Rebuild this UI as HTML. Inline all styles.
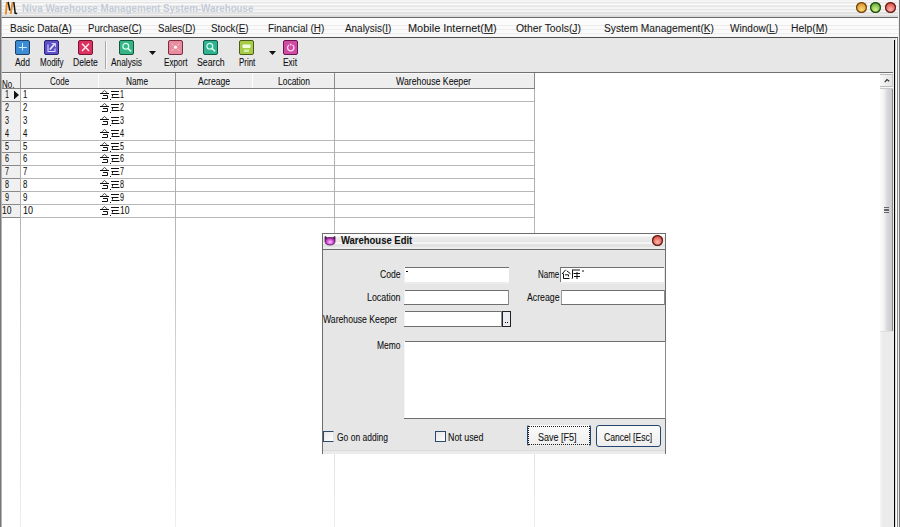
<!DOCTYPE html>
<html><head><meta charset="utf-8"><style>
html,body{margin:0;padding:0;}
body{width:900px;height:527px;position:relative;overflow:hidden;background:#fff;font-family:"Liberation Sans",sans-serif;}
body>div,body>svg{position:absolute;}
.t{white-space:nowrap;line-height:1;transform-origin:0 0;-webkit-text-stroke:0.08px currentColor;}
</style></head><body>
<div style="left:0px;top:0px;width:900px;height:17px;background:linear-gradient(#f2f2f2 0px 1px,#f8f8f8 1px 2px,#e6e6e6 2px 3px,#f2f2f2 3px 4px,#fafafa 4px 5px,#eaeaea 5px 6px,#e8e8e8 6px 7px,#f5f5f5 7px 8px,#f6f6f6 8px 9px,#e6e6e6 9px 10px,#efefef 10px 11px,#f6f6f6 11px 12px,#e2e2e2 12px 13px,#e2e2e2 13px 14px,#eeeeee 14px 15px,#dedede 15px 16px,#d8d8d8 16px 17px);"></div>
<div style="left:0px;top:17px;width:900px;height:1px;background:#6a6a6a;"></div>
<div style="left:0px;top:18px;width:900px;height:19px;background:linear-gradient(#fcfcfc 0px 1px,#fcfcfc 1px 2px,#fcfcfc 2px 3px,#fcfcfc 3px 4px,#fcfcfc 4px 5px,#fcfcfc 5px 6px,#fcfcfc 6px 7px,#ececec 7px 8px,#fafafa 8px 9px,#fafafa 9px 10px,#fafafa 10px 11px,#ededed 11px 12px,#fafafa 12px 13px,#fafafa 13px 14px,#fafafa 14px 15px,#eeeeee 15px 16px,#f8f8f8 16px 17px,#f8f8f8 17px 18px,#f8f8f8 18px 19px);"></div>
<div style="left:0px;top:37px;width:900px;height:1px;background:#4e4e4e;"></div>
<div style="left:0px;top:38px;width:900px;height:34px;background:#e7e7e7;"></div>
<div style="left:0px;top:72px;width:894px;height:1px;background:#707070;"></div>
<div style="left:0px;top:0px;width:1px;height:527px;background:#777;"></div>
<div style="left:1px;top:0px;width:1px;height:527px;background:#b4b4b4;"></div>
<div class="t" style="left:22px;top:4.45px;font-size:10px;font-weight:bold;color:#c2cad5;transform:scaleX(0.9786);text-shadow:0 0 1px #fff;-webkit-text-stroke:0;">Niva Warehouse Management System-Warehouse</div>
<svg style="left:0px;top:0px" width="20" height="16" viewBox="0 0 20 16">
<path d="M5.8 14.5L7 2M10.6 14L12.6 2" stroke="#e8902c" stroke-width="2" fill="none"/>
<path d="M8.2 2L9.8 10.5M13.8 2L15.2 13.3L17.2 13.6" stroke="#111" stroke-width="1.5" fill="none"/>
</svg>
<div style="left:856.0px;top:2px;width:11px;height:11px;border-radius:50%;background:radial-gradient(circle at 50% 70%, #f8dc78 0, #dc8a28 75%);box-shadow:0 0 0 1.2px #6e4410 inset;"></div>
<div style="left:870.0px;top:2px;width:11px;height:11px;border-radius:50%;background:radial-gradient(circle at 50% 70%, #d4f48a 0, #5aa430 75%);box-shadow:0 0 0 1.2px #1f4614 inset;"></div>
<div style="left:884.5px;top:2px;width:11px;height:11px;border-radius:50%;background:radial-gradient(circle at 50% 70%, #ffb4b0 0, #d4483c 75%);box-shadow:0 0 0 1.2px #641c16 inset;"></div>
<div class="t" style="left:10px;top:23.95px;font-size:10px;color:#1a1a1a;transform:scaleX(1.0009);">Basic Data(A)</div>
<div style="left:61.7px;top:33px;width:6.7px;height:1px;background:#333;"></div>
<div class="t" style="left:87.5px;top:23.95px;font-size:10px;color:#1a1a1a;transform:scaleX(0.9574);">Purchase(C)</div>
<div style="left:131.1px;top:33px;width:6.9px;height:1px;background:#333;"></div>
<div class="t" style="left:157.5px;top:23.95px;font-size:10px;color:#1a1a1a;transform:scaleX(0.9639);">Sales(D)</div>
<div style="left:184.8px;top:33px;width:7.0px;height:1px;background:#333;"></div>
<div class="t" style="left:211.25px;top:23.95px;font-size:10px;color:#1a1a1a;transform:scaleX(0.9779);">Stock(E)</div>
<div style="left:239.0px;top:33px;width:6.5px;height:1px;background:#333;"></div>
<div class="t" style="left:267.5px;top:23.95px;font-size:10px;color:#1a1a1a;transform:scaleX(0.9922);">Financial (H)</div>
<div style="left:313.3px;top:33px;width:7.2px;height:1px;background:#333;"></div>
<div class="t" style="left:345px;top:23.95px;font-size:10px;color:#1a1a1a;transform:scaleX(0.9907);">Analysis(I)</div>
<div style="left:385.2px;top:33px;width:2.8px;height:1px;background:#333;"></div>
<div class="t" style="left:407.5px;top:23.95px;font-size:10px;color:#1a1a1a;transform:scaleX(1.0936);">Mobile Internet(M)</div>
<div style="left:483.5px;top:33px;width:9.1px;height:1px;background:#333;"></div>
<div class="t" style="left:515.5px;top:23.95px;font-size:10px;color:#1a1a1a;transform:scaleX(1.0380);">Other Tools(J)</div>
<div style="left:571.9px;top:33px;width:5.2px;height:1px;background:#333;"></div>
<div class="t" style="left:603.75px;top:23.95px;font-size:10px;color:#1a1a1a;transform:scaleX(1.0201);">System Management(K)</div>
<div style="left:703.5px;top:33px;width:6.8px;height:1px;background:#333;"></div>
<div class="t" style="left:730px;top:23.95px;font-size:10px;color:#1a1a1a;transform:scaleX(1.0042);">Window(L)</div>
<div style="left:769.1px;top:33px;width:5.6px;height:1px;background:#333;"></div>
<div class="t" style="left:791.25px;top:23.95px;font-size:10px;color:#1a1a1a;transform:scaleX(1.0333);">Help(M)</div>
<div style="left:815.9px;top:33px;width:8.6px;height:1px;background:#333;"></div>
<svg style="left:15px;top:40px" width="15" height="15" viewBox="0 0 15 15"><rect x="0.5" y="0.5" width="14" height="14" rx="1.5" fill="#3d8bd3" stroke="#1c3f6c"/><path d="M7.5 3V10.5M3.8 7.5H11.8" stroke="#c8ecff" stroke-width="1"/></svg>
<svg style="left:44px;top:40px" width="15" height="15" viewBox="0 0 15 15"><rect x="0.5" y="0.5" width="14" height="14" rx="1.5" fill="#5e50c6" stroke="#2a2072"/><path d="M4 4.5V11.5H11V8.5" stroke="#ddd6ff" stroke-width="1.1" fill="none"/><path d="M5.8 9.5L10.6 4" stroke="#f4f0ff" stroke-width="1.6"/><path d="M7.5 3.5H11.5V7" stroke="#ddd6ff" stroke-width="0.9" fill="none"/></svg>
<svg style="left:78px;top:40px" width="15" height="15" viewBox="0 0 15 15"><rect x="0.5" y="0.5" width="14" height="14" rx="1.5" fill="#dc3260" stroke="#7a1434"/><path d="M4 3.8L11 11M11 3.8L4 11" stroke="#fff0f4" stroke-width="1.4"/></svg>
<svg style="left:119px;top:40px" width="15" height="15" viewBox="0 0 15 15"><rect x="0.5" y="0.5" width="14" height="14" rx="1.5" fill="#38b387" stroke="#10583c"/><circle cx="6.8" cy="6.2" r="2.9" stroke="#d0ffec" stroke-width="1.3" fill="none"/><path d="M8.8 8.4L12.2 11.4" stroke="#d0ffec" stroke-width="1.5"/></svg>
<svg style="left:168px;top:40px" width="15" height="15" viewBox="0 0 15 15"><rect x="0.5" y="0.5" width="14" height="14" rx="1.5" fill="#e68c9e" stroke="#7c2c40"/><circle cx="7.5" cy="7.2" r="1.6" fill="#fff4f6"/><path d="M3.5 3.5L5.5 5.5M11.5 3.5L9.5 5.5M3.5 11L5.5 9M11.5 11L9.5 9" stroke="#f8c4ce" stroke-width="1"/></svg>
<svg style="left:203px;top:40px" width="15" height="15" viewBox="0 0 15 15"><rect x="0.5" y="0.5" width="14" height="14" rx="1.5" fill="#31b190" stroke="#105a48"/><circle cx="6.8" cy="6.2" r="2.9" stroke="#d0ffec" stroke-width="1.3" fill="none"/><path d="M8.8 8.4L12.2 11.4" stroke="#d0ffec" stroke-width="1.5"/></svg>
<svg style="left:239px;top:40px" width="15" height="15" viewBox="0 0 15 15"><rect x="0.5" y="0.5" width="14" height="14" rx="1.5" fill="#a6cc4a" stroke="#4c5c16"/><rect x="3.5" y="4.5" width="8" height="3.5" rx="1" fill="#f4ffe0"/><path d="M5 9.5H10V12H5Z" fill="#d6f0a0"/></svg>
<svg style="left:283px;top:40px" width="15" height="15" viewBox="0 0 15 15"><rect x="0.5" y="0.5" width="14" height="14" rx="1.5" fill="#cf4ca3" stroke="#6c1252"/><path d="M6 5A3.2 3.2 0 1 0 9.5 5" stroke="#ffd6f2" stroke-width="1.3" fill="none"/><path d="M6.5 3.5L9 4.2L7.5 6Z" fill="#ffd6f2"/></svg>
<div class="t" style="left:15px;top:57.95px;font-size:10px;color:#111;transform:scaleX(0.8428);">Add</div>
<div class="t" style="left:40.3px;top:57.95px;font-size:10px;color:#111;transform:scaleX(0.8012);">Modify</div>
<div class="t" style="left:73px;top:57.95px;font-size:10px;color:#111;transform:scaleX(0.8578);">Delete</div>
<div class="t" style="left:111px;top:57.95px;font-size:10px;color:#111;transform:scaleX(0.8324);">Analysis</div>
<div class="t" style="left:163.5px;top:57.95px;font-size:10px;color:#111;transform:scaleX(0.8130);">Export</div>
<div class="t" style="left:196.7px;top:57.95px;font-size:10px;color:#111;transform:scaleX(0.8741);">Search</div>
<div class="t" style="left:238.7px;top:57.95px;font-size:10px;color:#111;transform:scaleX(0.7926);">Print</div>
<div class="t" style="left:283px;top:57.95px;font-size:10px;color:#111;transform:scaleX(0.8397);">Exit</div>
<svg style="left:149px;top:51px" width="7" height="4" viewBox="0 0 7 4"><path d="M0 0H7L3.5 4Z" fill="#111"/></svg>
<svg style="left:269px;top:51px" width="7" height="4" viewBox="0 0 7 4"><path d="M0 0H7L3.5 4Z" fill="#111"/></svg>
<div style="left:105px;top:41px;width:1px;height:28px;background:#a8a8a8;"></div>
<div style="left:106px;top:41px;width:1px;height:28px;background:#fafafa;"></div>
<div style="left:2px;top:73px;width:878px;height:454px;background:#fff;"></div>
<div style="left:2px;top:73px;width:532px;height:15px;background:#eeeeee;"></div>
<div style="left:2px;top:73px;width:532px;height:1px;background:#fafafa;"></div>
<div style="left:2px;top:88px;width:533px;height:1px;background:#7d7d7d;"></div>
<div style="left:98px;top:73px;width:1px;height:15px;background:#fdfdfd;"></div>
<div style="left:252px;top:73px;width:1px;height:15px;background:#fdfdfd;"></div>
<div style="left:20px;top:73px;width:1px;height:15px;background:#8a8a8a;"></div>
<div style="left:175px;top:73px;width:1px;height:15px;background:#8a8a8a;"></div>
<div style="left:334px;top:73px;width:1px;height:15px;background:#8a8a8a;"></div>
<div style="left:534px;top:73px;width:1px;height:15px;background:#8a8a8a;"></div>
<div style="left:2px;top:89px;width:18px;height:129px;background:#f0f0f0;"></div>
<div style="left:2px;top:101px;width:533px;height:1px;background:#b8b8b8;"></div>
<div style="left:2px;top:101px;width:18px;height:1px;background:#8a8a8a;"></div>
<div style="left:2px;top:140px;width:533px;height:1px;background:#b8b8b8;"></div>
<div style="left:2px;top:140px;width:18px;height:1px;background:#8a8a8a;"></div>
<div style="left:2px;top:152px;width:533px;height:1px;background:#b8b8b8;"></div>
<div style="left:2px;top:152px;width:18px;height:1px;background:#8a8a8a;"></div>
<div style="left:2px;top:165px;width:533px;height:1px;background:#b8b8b8;"></div>
<div style="left:2px;top:165px;width:18px;height:1px;background:#8a8a8a;"></div>
<div style="left:2px;top:178px;width:533px;height:1px;background:#b8b8b8;"></div>
<div style="left:2px;top:178px;width:18px;height:1px;background:#8a8a8a;"></div>
<div style="left:2px;top:191px;width:533px;height:1px;background:#b8b8b8;"></div>
<div style="left:2px;top:191px;width:18px;height:1px;background:#8a8a8a;"></div>
<div style="left:2px;top:204px;width:533px;height:1px;background:#b8b8b8;"></div>
<div style="left:2px;top:204px;width:18px;height:1px;background:#8a8a8a;"></div>
<div style="left:2px;top:217px;width:533px;height:1px;background:#b8b8b8;"></div>
<div style="left:2px;top:217px;width:18px;height:1px;background:#8a8a8a;"></div>
<div style="left:20px;top:89px;width:1px;height:129px;background:#b0b0b0;"></div>
<div style="left:175px;top:89px;width:1px;height:129px;background:#b0b0b0;"></div>
<div style="left:334px;top:89px;width:1px;height:129px;background:#b0b0b0;"></div>
<div style="left:534px;top:89px;width:1px;height:129px;background:#b0b0b0;"></div>
<div style="left:20px;top:218px;width:1px;height:309px;background:linear-gradient(#b4b4b4,#c8c8c8 25%,#d8d8d8 55%,#eeeeee 100%);"></div>
<div style="left:175px;top:218px;width:1px;height:309px;background:linear-gradient(#b4b4b4,#c8c8c8 25%,#d8d8d8 55%,#eeeeee 100%);"></div>
<div style="left:334px;top:218px;width:1px;height:309px;background:linear-gradient(#b4b4b4,#c8c8c8 25%,#d8d8d8 55%,#eeeeee 100%);"></div>
<div style="left:534px;top:218px;width:1px;height:309px;background:linear-gradient(#b4b4b4,#c8c8c8 25%,#d8d8d8 55%,#eeeeee 100%);"></div>
<div class="t" style="left:1.8px;top:80.45px;font-size:10px;color:#111;transform:scaleX(0.7968);">No.</div>
<div class="t" style="left:49.8px;top:77.25px;font-size:10px;color:#111;transform:scaleX(0.7988);">Code</div>
<div class="t" style="left:126px;top:77.25px;font-size:10px;color:#111;transform:scaleX(0.8246);">Name</div>
<div class="t" style="left:198px;top:77.25px;font-size:10px;color:#111;transform:scaleX(0.8590);">Acreage</div>
<div class="t" style="left:278px;top:77.25px;font-size:10px;color:#111;transform:scaleX(0.8463);">Location</div>
<div class="t" style="left:396px;top:77.25px;font-size:10px;color:#111;transform:scaleX(0.8741);">Warehouse Keeper</div>
<div class="t" style="left:4.5px;top:89.95px;font-size:10px;color:#111;transform:scaleX(0.7191);">1</div>
<div class="t" style="left:22.5px;top:89.95px;font-size:10px;color:#111;transform:scaleX(0.7730);">1</div>
<svg style="left:100px;top:90px" width="20" height="11" viewBox="0 0 20 11">
<path d="M1.5 3.2L4.5 0.5L7.5 3.2" stroke="#111" stroke-opacity="0.75" stroke-width="1" fill="none"/><path d="M0 3.5H9M3 5.5H7.5V8.5H2" stroke="#111" stroke-width="1" fill="none"/><rect x="10" y="9" width="1" height="1" fill="#111"/>
<path d="M11 1.5H19M11.5 4.5H18.5M11.5 7.5H19.5" stroke="#111" stroke-width="1" fill="none"/><rect x="12" y="5" width="1" height="1.5" fill="#111"/>
</svg>
<div class="t" style="left:120px;top:89.95px;font-size:10px;color:#111;transform:scaleX(0.7191);">1</div>
<div class="t" style="left:4.5px;top:102.85px;font-size:10px;color:#111;transform:scaleX(0.7191);">2</div>
<div class="t" style="left:22.5px;top:102.85px;font-size:10px;color:#111;transform:scaleX(0.7730);">2</div>
<svg style="left:100px;top:103px" width="20" height="11" viewBox="0 0 20 11">
<path d="M1.5 3.2L4.5 0.5L7.5 3.2" stroke="#111" stroke-opacity="0.75" stroke-width="1" fill="none"/><path d="M0 3.5H9M3 5.5H7.5V8.5H2" stroke="#111" stroke-width="1" fill="none"/><rect x="10" y="9" width="1" height="1" fill="#111"/>
<path d="M11 1.5H19M11.5 4.5H18.5M11.5 7.5H19.5" stroke="#111" stroke-width="1" fill="none"/><rect x="12" y="5" width="1" height="1.5" fill="#111"/>
</svg>
<div class="t" style="left:120px;top:102.85px;font-size:10px;color:#111;transform:scaleX(0.7191);">2</div>
<div class="t" style="left:4.5px;top:115.75px;font-size:10px;color:#111;transform:scaleX(0.7191);">3</div>
<div class="t" style="left:22.5px;top:115.75px;font-size:10px;color:#111;transform:scaleX(0.7730);">3</div>
<svg style="left:100px;top:116px" width="20" height="11" viewBox="0 0 20 11">
<path d="M1.5 3.2L4.5 0.5L7.5 3.2" stroke="#111" stroke-opacity="0.75" stroke-width="1" fill="none"/><path d="M0 3.5H9M3 5.5H7.5V8.5H2" stroke="#111" stroke-width="1" fill="none"/><rect x="10" y="9" width="1" height="1" fill="#111"/>
<path d="M11 1.5H19M11.5 4.5H18.5M11.5 7.5H19.5" stroke="#111" stroke-width="1" fill="none"/><rect x="12" y="5" width="1" height="1.5" fill="#111"/>
</svg>
<div class="t" style="left:120px;top:115.75px;font-size:10px;color:#111;transform:scaleX(0.7191);">3</div>
<div class="t" style="left:4.5px;top:128.65px;font-size:10px;color:#111;transform:scaleX(0.7191);">4</div>
<div class="t" style="left:22.5px;top:128.65px;font-size:10px;color:#111;transform:scaleX(0.7730);">4</div>
<svg style="left:100px;top:129px" width="20" height="11" viewBox="0 0 20 11">
<path d="M1.5 3.2L4.5 0.5L7.5 3.2" stroke="#111" stroke-opacity="0.75" stroke-width="1" fill="none"/><path d="M0 3.5H9M3 5.5H7.5V8.5H2" stroke="#111" stroke-width="1" fill="none"/><rect x="10" y="9" width="1" height="1" fill="#111"/>
<path d="M11 1.5H19M11.5 4.5H18.5M11.5 7.5H19.5" stroke="#111" stroke-width="1" fill="none"/><rect x="12" y="5" width="1" height="1.5" fill="#111"/>
</svg>
<div class="t" style="left:120px;top:128.65px;font-size:10px;color:#111;transform:scaleX(0.7191);">4</div>
<div class="t" style="left:4.5px;top:141.55px;font-size:10px;color:#111;transform:scaleX(0.7191);">5</div>
<div class="t" style="left:22.5px;top:141.55px;font-size:10px;color:#111;transform:scaleX(0.7730);">5</div>
<svg style="left:100px;top:142px" width="20" height="11" viewBox="0 0 20 11">
<path d="M1.5 3.2L4.5 0.5L7.5 3.2" stroke="#111" stroke-opacity="0.75" stroke-width="1" fill="none"/><path d="M0 3.5H9M3 5.5H7.5V8.5H2" stroke="#111" stroke-width="1" fill="none"/><rect x="10" y="9" width="1" height="1" fill="#111"/>
<path d="M11 1.5H19M11.5 4.5H18.5M11.5 7.5H19.5" stroke="#111" stroke-width="1" fill="none"/><rect x="12" y="5" width="1" height="1.5" fill="#111"/>
</svg>
<div class="t" style="left:120px;top:141.55px;font-size:10px;color:#111;transform:scaleX(0.7191);">5</div>
<div class="t" style="left:4.5px;top:154.45px;font-size:10px;color:#111;transform:scaleX(0.7191);">6</div>
<div class="t" style="left:22.5px;top:154.45px;font-size:10px;color:#111;transform:scaleX(0.7730);">6</div>
<svg style="left:100px;top:154px" width="20" height="11" viewBox="0 0 20 11">
<path d="M1.5 3.2L4.5 0.5L7.5 3.2" stroke="#111" stroke-opacity="0.75" stroke-width="1" fill="none"/><path d="M0 3.5H9M3 5.5H7.5V8.5H2" stroke="#111" stroke-width="1" fill="none"/><rect x="10" y="9" width="1" height="1" fill="#111"/>
<path d="M11 1.5H19M11.5 4.5H18.5M11.5 7.5H19.5" stroke="#111" stroke-width="1" fill="none"/><rect x="12" y="5" width="1" height="1.5" fill="#111"/>
</svg>
<div class="t" style="left:120px;top:154.45px;font-size:10px;color:#111;transform:scaleX(0.7191);">6</div>
<div class="t" style="left:4.5px;top:167.35px;font-size:10px;color:#111;transform:scaleX(0.7191);">7</div>
<div class="t" style="left:22.5px;top:167.35px;font-size:10px;color:#111;transform:scaleX(0.7730);">7</div>
<svg style="left:100px;top:167px" width="20" height="11" viewBox="0 0 20 11">
<path d="M1.5 3.2L4.5 0.5L7.5 3.2" stroke="#111" stroke-opacity="0.75" stroke-width="1" fill="none"/><path d="M0 3.5H9M3 5.5H7.5V8.5H2" stroke="#111" stroke-width="1" fill="none"/><rect x="10" y="9" width="1" height="1" fill="#111"/>
<path d="M11 1.5H19M11.5 4.5H18.5M11.5 7.5H19.5" stroke="#111" stroke-width="1" fill="none"/><rect x="12" y="5" width="1" height="1.5" fill="#111"/>
</svg>
<div class="t" style="left:120px;top:167.35px;font-size:10px;color:#111;transform:scaleX(0.7191);">7</div>
<div class="t" style="left:4.5px;top:180.25px;font-size:10px;color:#111;transform:scaleX(0.7191);">8</div>
<div class="t" style="left:22.5px;top:180.25px;font-size:10px;color:#111;transform:scaleX(0.7730);">8</div>
<svg style="left:100px;top:180px" width="20" height="11" viewBox="0 0 20 11">
<path d="M1.5 3.2L4.5 0.5L7.5 3.2" stroke="#111" stroke-opacity="0.75" stroke-width="1" fill="none"/><path d="M0 3.5H9M3 5.5H7.5V8.5H2" stroke="#111" stroke-width="1" fill="none"/><rect x="10" y="9" width="1" height="1" fill="#111"/>
<path d="M11 1.5H19M11.5 4.5H18.5M11.5 7.5H19.5" stroke="#111" stroke-width="1" fill="none"/><rect x="12" y="5" width="1" height="1.5" fill="#111"/>
</svg>
<div class="t" style="left:120px;top:180.25px;font-size:10px;color:#111;transform:scaleX(0.7191);">8</div>
<div class="t" style="left:4.5px;top:193.15px;font-size:10px;color:#111;transform:scaleX(0.7191);">9</div>
<div class="t" style="left:22.5px;top:193.15px;font-size:10px;color:#111;transform:scaleX(0.7730);">9</div>
<svg style="left:100px;top:193px" width="20" height="11" viewBox="0 0 20 11">
<path d="M1.5 3.2L4.5 0.5L7.5 3.2" stroke="#111" stroke-opacity="0.75" stroke-width="1" fill="none"/><path d="M0 3.5H9M3 5.5H7.5V8.5H2" stroke="#111" stroke-width="1" fill="none"/><rect x="10" y="9" width="1" height="1" fill="#111"/>
<path d="M11 1.5H19M11.5 4.5H18.5M11.5 7.5H19.5" stroke="#111" stroke-width="1" fill="none"/><rect x="12" y="5" width="1" height="1.5" fill="#111"/>
</svg>
<div class="t" style="left:120px;top:193.15px;font-size:10px;color:#111;transform:scaleX(0.7191);">9</div>
<div class="t" style="left:2px;top:206.05px;font-size:10px;color:#111;transform:scaleX(0.8539);">10</div>
<div class="t" style="left:22.5px;top:206.05px;font-size:10px;color:#111;transform:scaleX(0.8989);">10</div>
<svg style="left:100px;top:206px" width="20" height="11" viewBox="0 0 20 11">
<path d="M1.5 3.2L4.5 0.5L7.5 3.2" stroke="#111" stroke-opacity="0.75" stroke-width="1" fill="none"/><path d="M0 3.5H9M3 5.5H7.5V8.5H2" stroke="#111" stroke-width="1" fill="none"/><rect x="10" y="9" width="1" height="1" fill="#111"/>
<path d="M11 1.5H19M11.5 4.5H18.5M11.5 7.5H19.5" stroke="#111" stroke-width="1" fill="none"/><rect x="12" y="5" width="1" height="1.5" fill="#111"/>
</svg>
<div class="t" style="left:120px;top:206.05px;font-size:10px;color:#111;transform:scaleX(0.8539);">10</div>
<svg style="left:14px;top:91px" width="6" height="8" viewBox="0 0 6 8"><path d="M0.5 0V8" stroke="#111"/><path d="M1 0.5L5 4L1 7.5Z" fill="#111"/></svg>
<div style="left:880px;top:73px;width:13px;height:454px;background:#f6f6f6;"></div>
<div style="left:880px;top:74px;width:13px;height:13px;background:linear-gradient(90deg,#f8f8f8,#e4e4e4);border-top:1px solid #bdbdbd;border-bottom:1px solid #bdbdbd;border-right:1px solid #c8c8c8;box-sizing:border-box;"></div>
<svg style="left:884px;top:78px" width="6" height="5" viewBox="0 0 6 5"><path d="M0.8 4.2L3 1.5L5.2 3.2" stroke="#333" stroke-width="1.2" fill="none"/></svg>
<div style="left:880px;top:88px;width:13px;height:244px;background:linear-gradient(90deg,#fcfcfc 0,#f2f2f2 30%,#d6d6da 60%,#d0d0d4 85%,#c4c4c4 92%,#888 92%,#888 100%);border-top:1px solid #c8c8c8;border-bottom:1px solid #e0e0e0;box-sizing:border-box;"></div>
<div style="left:880px;top:332px;width:13px;height:195px;background:linear-gradient(90deg,#f6f6f6,#ebebeb 25%,#ebebeb);"></div>
<div style="left:884px;top:207px;width:5px;height:1px;background:#666;"></div>
<div style="left:884px;top:209px;width:5px;height:1px;background:#666;"></div>
<div style="left:884px;top:210px;width:5px;height:1px;background:#666;"></div>
<div style="left:884px;top:212px;width:5px;height:1px;background:#666;"></div>
<div style="left:893px;top:38px;width:1px;height:489px;background:#eeeeee;"></div>
<div style="left:894px;top:40px;width:1px;height:487px;background:#000;"></div>
<div style="left:895px;top:38px;width:1px;height:489px;background:#dddddd;"></div>
<div style="left:896px;top:38px;width:1px;height:489px;background:#ffffff;"></div>
<div style="left:897px;top:38px;width:1px;height:489px;background:#8a8a8a;"></div>
<div style="left:898px;top:0px;width:1px;height:527px;background:#f0f0f0;"></div>
<div style="left:899px;top:0px;width:1px;height:527px;background:#777;"></div>
<div style="left:322px;top:233px;width:344px;height:221px;background:#e6e6e6;"></div>
<div style="left:322px;top:233px;width:344px;height:1px;background:#6e6e6e;"></div>
<div style="left:322px;top:233px;width:1px;height:221px;background:#6e6e6e;"></div>
<div style="left:665px;top:233px;width:1px;height:221px;background:#6e6e6e;"></div>
<div style="left:323px;top:234px;width:342px;height:15px;background:linear-gradient(#fdfdfd 0px 1px,#fdfdfd 1px 2px,#f6f6f6 2px 3px,#ebebeb 3px 4px,#ebebeb 4px 5px,#e9e9e9 5px 6px,#e9e9e9 6px 7px,#e4e4e4 7px 8px,#f5f5f5 8px 9px,#f5f5f5 9px 10px,#e2e2e2 10px 11px,#e2e2e2 11px 12px,#e2e2e2 12px 13px,#ededed 13px 14px,#ededed 14px 15px);"></div>
<div style="left:323px;top:249px;width:342px;height:1px;background:#6a6a6a;"></div>
<div style="left:323px;top:450px;width:342px;height:1px;background:#dadada;"></div>
<div style="left:323px;top:451px;width:342px;height:3px;background:#ebebeb;"></div>
<svg style="left:324px;top:235px" width="12" height="11" viewBox="0 0 12 11"><defs><radialGradient id="pg" cx="50%" cy="65%" r="60%"><stop offset="0" stop-color="#ffc8ff"/><stop offset="0.55" stop-color="#d448d8"/><stop offset="1" stop-color="#5a1a5e"/></radialGradient></defs><path d="M1 1.5L3.5 2.8Q6 2.2 8.5 2.8L11 1.5L11 6Q11 10 6 10Q1 10 1 6Z" fill="url(#pg)" stroke="#4a164e" stroke-width="0.8"/></svg>
<div style="left:652px;top:235px;width:11px;height:11px;border-radius:50%;background:radial-gradient(circle at 50% 65%,#ffb8b0 0,#d8483a 70%);box-shadow:0 0 0 1.2px #5a1c16 inset;"></div>
<div class="t" style="left:340.8px;top:235.75px;font-size:10px;font-weight:bold;color:#111;transform:scaleX(0.9468);">Warehouse Edit</div>
<div style="left:404px;top:267px;width:105px;height:15px;background:#fff;"></div>
<div style="left:404px;top:267px;width:105px;height:1px;background:#6f6f6f;"></div>
<div style="left:404px;top:267px;width:1px;height:15px;background:#f0f0f0;"></div>
<div style="left:404px;top:282px;width:105px;height:2px;background:#ececec;"></div>
<div style="left:560px;top:267px;width:104px;height:15px;background:#fff;"></div>
<div style="left:560px;top:267px;width:104px;height:1px;background:#6f6f6f;"></div>
<div style="left:560px;top:267px;width:1px;height:15px;background:#777;"></div>
<div style="left:561px;top:282px;width:103px;height:2px;background:#ececec;"></div>
<div style="left:404px;top:290px;width:105px;height:15px;background:#fff;"></div>
<div style="left:404px;top:290px;width:105px;height:1px;background:#6f6f6f;"></div>
<div style="left:404px;top:290px;width:1px;height:15px;background:#f4f4f4;"></div>
<div style="left:404px;top:304px;width:105px;height:1px;background:#6f6f6f;"></div>
<div style="left:508px;top:290px;width:1px;height:15px;background:#8a8a8a;"></div>
<div style="left:561px;top:290px;width:104px;height:15px;background:#fff;"></div>
<div style="left:561px;top:290px;width:104px;height:1px;background:#6f6f6f;"></div>
<div style="left:561px;top:290px;width:1px;height:15px;background:#9a9a9a;"></div>
<div style="left:561px;top:304px;width:104px;height:1px;background:#6f6f6f;"></div>
<div style="left:664px;top:290px;width:1px;height:15px;background:#8a8a8a;"></div>
<div style="left:404px;top:311px;width:98px;height:16px;background:#fff;"></div>
<div style="left:404px;top:311px;width:98px;height:1px;background:#6f6f6f;"></div>
<div style="left:404px;top:311px;width:1px;height:16px;background:#f4f4f4;"></div>
<div style="left:404px;top:326px;width:98px;height:1px;background:#6f6f6f;"></div>
<div style="left:501px;top:311px;width:1px;height:16px;background:#8a8a8a;"></div>
<div style="left:502px;top:311px;width:9px;height:16px;background:#ebebf2;border:1px solid #222;box-sizing:border-box;"></div>
<div style="left:505px;top:322px;width:1px;height:1px;background:#111;"></div>
<div style="left:507px;top:322px;width:1px;height:1px;background:#111;"></div>
<div style="left:404px;top:341px;width:262px;height:78px;background:#fff;"></div>
<div style="left:404px;top:341px;width:262px;height:1px;background:#6f6f6f;"></div>
<div style="left:404px;top:341px;width:1px;height:78px;background:#f4f4f4;"></div>
<div style="left:404px;top:418px;width:262px;height:1px;background:#6f6f6f;"></div>
<div style="left:665px;top:341px;width:1px;height:78px;background:#8a8a8a;"></div>
<div class="t" style="left:379.6px;top:270.15px;font-size:10px;color:#111;transform:scaleX(0.8616);">Code</div>
<div class="t" style="left:537.5px;top:270.35px;font-size:10px;color:#111;transform:scaleX(0.7946);">Name</div>
<div class="t" style="left:366.7px;top:292.65px;font-size:10px;color:#111;transform:scaleX(0.8860);">Location</div>
<div class="t" style="left:526.7px;top:293.25px;font-size:10px;color:#111;transform:scaleX(0.8724);">Acreage</div>
<div class="t" style="left:323.2px;top:314.85px;font-size:10px;color:#111;transform:scaleX(0.8648);">Warehouse Keeper</div>
<div class="t" style="left:376.7px;top:341.15px;font-size:10px;color:#111;transform:scaleX(0.8457);">Memo</div>
<div style="left:406px;top:271px;width:2px;height:1px;background:#111;"></div>
<svg style="left:561px;top:269px" width="24" height="11" viewBox="0 0 24 11">
<path d="M4.7 0.8L1 5M5.8 1.8L9.5 4.8M2.5 4.5V9.5H8.5M4 5.8H7.5V7.5" stroke="#111" stroke-width="1" fill="none"/>
<path d="M11 1H19M11.5 1V9L11 9.8M12.5 4.5H19M13 7.5H19M16 3V10" stroke="#111" stroke-width="1" fill="none"/>
<path d="M21 2H23" stroke="#111" stroke-width="1"/>
</svg>
<div style="left:323px;top:431px;width:11px;height:11px;background:linear-gradient(135deg,#e6e6e6,#fff);border:1px solid #2c4a6a;border-right-color:#dfe6ee;box-sizing:border-box;"></div>
<div style="left:435px;top:431px;width:11px;height:11px;background:linear-gradient(135deg,#e6e6e6,#fff);border:1px solid #2c4a6a;box-sizing:border-box;"></div>
<div class="t" style="left:336.7px;top:432.95px;font-size:10px;color:#111;transform:scaleX(0.8492);">Go on adding</div>
<div class="t" style="left:448px;top:432.95px;font-size:10px;color:#111;transform:scaleX(0.8844);">Not used</div>
<div style="left:527px;top:425px;width:64px;height:21px;background:linear-gradient(#fbfbfb,#ededed);border-left:1px solid #24466e;border-right:1px solid #24466e;border-radius:2px;box-sizing:border-box;"></div>
<div style="left:528px;top:426px;width:62px;height:19px;border:1px dotted #1a1a1a;box-sizing:border-box;"></div>
<div style="left:596px;top:425px;width:65px;height:22px;background:linear-gradient(#fbfbfb,#ededed);border:1px solid #24466e;border-radius:3px;box-sizing:border-box;"></div>
<div class="t" style="left:538px;top:432.75px;font-size:10px;color:#111;transform:scaleX(0.8972);">Save [F5]</div>
<div class="t" style="left:603.5px;top:432.95px;font-size:10px;color:#111;transform:scaleX(0.8568);">Cancel [Esc]</div>
</body></html>
